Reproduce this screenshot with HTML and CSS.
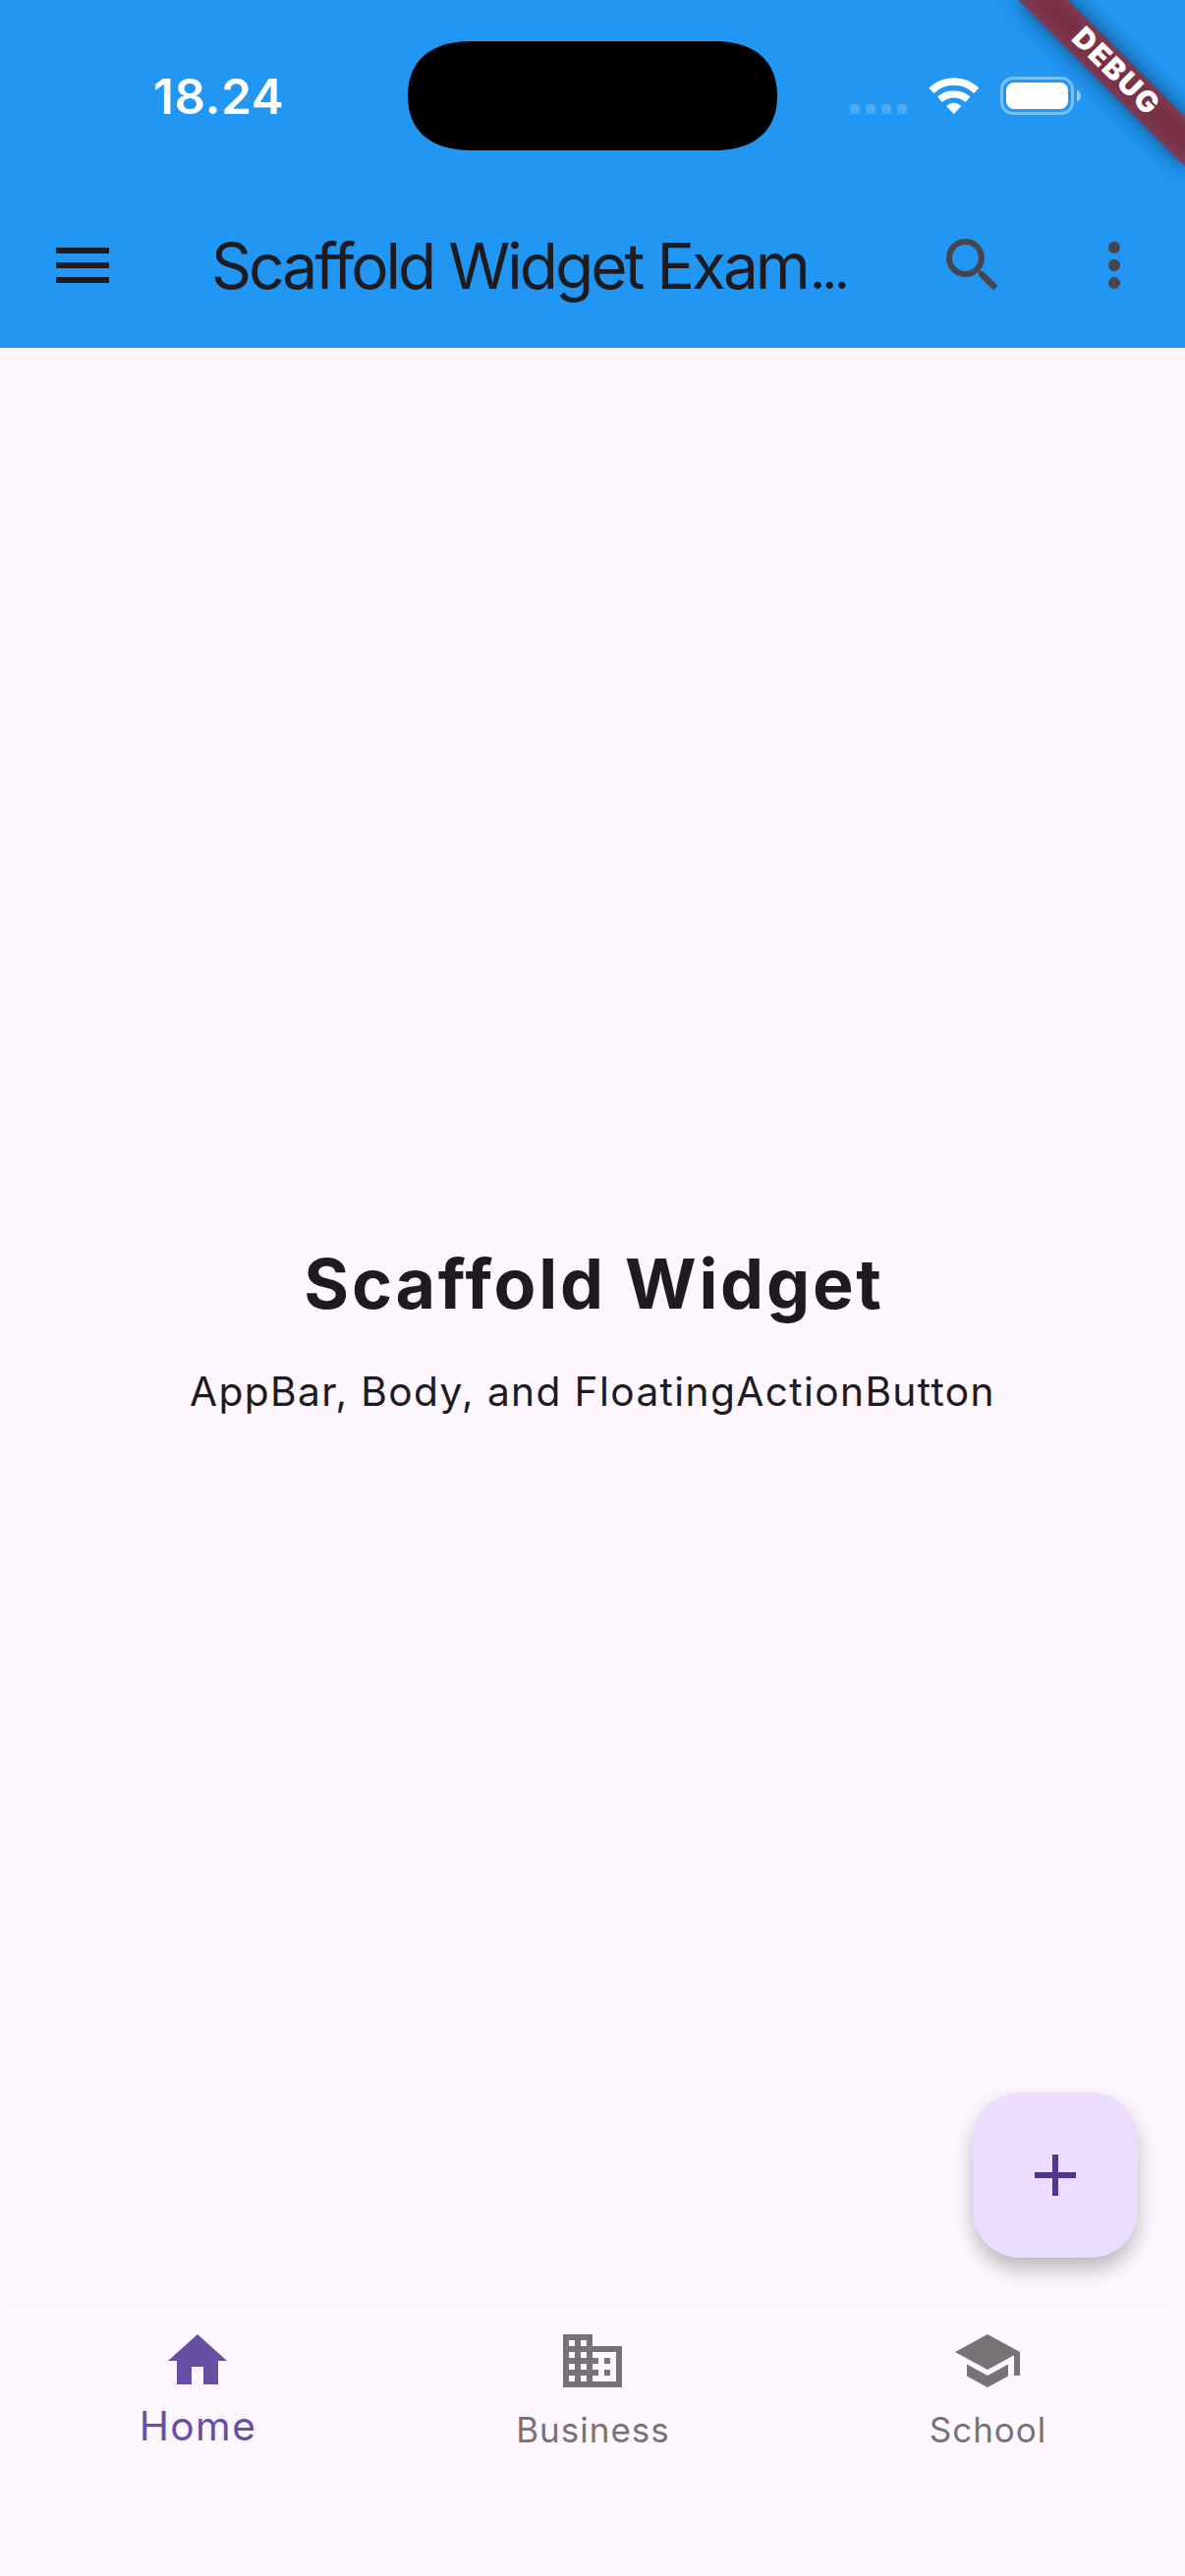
FILE: index.html
```
<!DOCTYPE html>
<html lang="en">
<head>
<meta charset="utf-8">
<title>Scaffold Widget Example</title>
<link rel="stylesheet" href="styles.css">
</head>
<body>
<div class="screen">
  <header class="top">
    <div class="status-bar">
      <span class="time">18.24</span>
      <svg class="island" viewBox="0 0 376 111"><path d="M64 0H312C354 0 376 21 376 55.5S354 111 312 111H64C22 111 0 90 0 55.5S22 0 64 0z"/></svg>
      <div class="status-icons">
        <div class="signal"><i></i><i></i><i></i><i></i></div>
        <svg class="wifi" viewBox="0 0 52 38" fill="none" stroke="#fff">
          <path d="M2.9 13.3A33 33 0 0 1 48.7 13.3" stroke-width="7.5"/>
          <path d="M11.5 22.3A21.6 21.6 0 0 1 40.1 22.3" stroke-width="7.3"/>
          <path d="M18 29Q25.8 22 33.5 29L25.8 37z" fill="#fff" stroke="none"/>
        </svg>
        <svg class="battery" viewBox="0 0 83 39">
          <rect x="1.5" y="1.5" width="72" height="36" rx="11.5" fill="none" stroke="#fff" stroke-opacity=".4" stroke-width="3"/>
          <rect x="6" y="6" width="63" height="27" rx="8" fill="#fff"/>
          <path d="M78 13.5Q82 15.5 82 19.5T78 25.5z" fill="#fff" fill-opacity=".5"/>
        </svg>
      </div>
    </div>
    <div class="app-bar">
      <svg class="icon menu" viewBox="0 0 24 24"><path d="M3 18h18v-2H3v2zm0-5h18v-2H3v2zm0-7v2h18V6H3z"/></svg>
      <h1 class="title">Scaffold Widget Exam<span class="dots">...</span></h1>
      <svg class="icon" viewBox="0 0 24 24"><path d="M15.5 14h-.79l-.28-.27C15.41 12.59 16 11.11 16 9.5 16 5.91 13.09 3 9.5 3S3 5.91 3 9.5 5.91 16 9.5 16c1.61 0 3.09-.59 4.23-1.57l.27.28v.79l5 4.99L20.49 19l-4.99-5zm-6 0C7.01 14 5 11.99 5 9.5S7.01 5 9.5 5 14 7.01 14 9.5 11.99 14 9.5 14z"/></svg>
      <svg class="icon" viewBox="0 0 24 24"><path d="M12 8c1.1 0 2-.9 2-2s-.9-2-2-2-2 .9-2 2 .9 2 2 2zm0 2c-1.1 0-2 .9-2 2s.9 2 2 2 2-.9 2-2-.9-2-2-2zm0 6c-1.1 0-2 .9-2 2s.9 2 2 2 2-.9 2-2-.9-2-2-2z"/></svg>
    </div>
  </header>
  <main class="body">
    <h2 class="heading">Scaffold Widget</h2>
    <p class="subtitle">AppBar, Body, and FloatingActionButton</p>
    <button class="fab" aria-label="Add"><svg class="icon" viewBox="0 0 24 24"><path d="M19 13h-6v6h-2v-6H5v-2h6V5h2v6h6v2z"/></svg></button>
  </main>
  <nav class="nav">
    <a class="item active"><svg class="icon" viewBox="0 0 24 24"><path d="M10 20v-6h4v6h5v-8h3L12 3 2 12h3v8z"/></svg><span>Home</span></a>
    <a class="item"><svg class="icon" viewBox="0 0 24 24"><path d="M12 7V3H2v18h20V7H12zM6 19H4v-2h2v2zm0-4H4v-2h2v2zm0-4H4V9h2v2zm0-4H4V5h2v2zm4 12H8v-2h2v2zm0-4H8v-2h2v2zm0-4H8V9h2v2zm0-4H8V5h2v2zm10 12h-8v-2h2v-2h-2v-2h2v-2h-2V9h8v10zm-2-8h-2v2h2v-2zm0 4h-2v2h2v-2z"/></svg><span>Business</span></a>
    <a class="item"><svg class="icon" viewBox="0 0 24 24"><path d="M5 13.18v4L12 21l7-3.82v-4L12 17l-7-3.82zM12 3L1 9l11 6 9-4.91V17h2V9L12 3z"/></svg><span>School</span></a>
  </nav>
  <div class="banner"><div class="banner-shadow"></div><div class="ribbon">DEBUG</div></div>
</div>
</body>
</html>
```
FILE: styles.css
```
* { box-sizing: border-box; }
body { margin: 0; font-family: Inter, "Liberation Sans", sans-serif; color: #1d1b20; background: #fef7ff; }
h1, h2, p { margin: 0; font-weight: 400; }
svg { display: block; flex: none; }
.screen { position: relative; width: 1206px; height: 2622px; overflow: hidden; display: flex; flex-direction: column; background: #fef7ff; }
.icon { width: 72px; height: 72px; fill: currentColor; }

.top { height: 354px; flex: none; background: #2196f3; }
.status-bar { height: 186px; display: grid; grid-template-columns: 415px 376px 415px; align-items: start; padding-top: 41.5px; }
.time { justify-self: start; margin-left: 156px; margin-top: 31px; font-size: 49.5px; line-height: 51px; font-weight: 600; letter-spacing: .6px; color: #fff; }
.island { width: 376px; height: 111px; }
.status-icons { display: flex; align-items: flex-start; padding: 36.5px 0 0 74px; }
.signal { display: flex; gap: 6px; margin-top: 28px; }
.signal i { width: 10px; height: 10px; border-radius: 3px; background: rgba(255, 255, 255, .2); }
.wifi { width: 52px; height: 38px; margin-left: 22px; margin-top: 1px; }
.battery { width: 83px; height: 39px; margin-left: 21px; }

.app-bar { height: 168px; display: flex; align-items: center; padding: 0 36px 0 48px; color: #49454f; }
.menu { color: #1d1b20; }
.title { flex: 1; margin-left: 95px; padding-top: 1px; font-size: 64px; line-height: 84px; letter-spacing: -3px; white-space: nowrap; color: #1d1b20; }
.dots { margin-left: 2px; font-size: 56px; line-height: 1; letter-spacing: -3.7px; }
.app-bar .icon + .icon { margin-left: 72px; }

.body { flex: 1; position: relative; display: flex; flex-direction: column; align-items: center; justify-content: center; gap: 30px; }
.heading { font-size: 70px; line-height: 102px; font-weight: 700; letter-spacing: 2.72px; padding-left: 3px; }
.subtitle { font-size: 40.7px; line-height: 57px; letter-spacing: 1.37px; }
.fab { position: absolute; right: 48px; bottom: 48px; width: 168px; height: 168px; padding: 48px; border: 0; border-radius: 48px; background: #eaddff; color: #4f378b; box-shadow: 0 14px 22px -2px rgba(0, 0, 0, .24), 0 2px 26px rgba(0, 0, 0, .06); }

.nav { position: relative; height: 276px; flex: none; display: grid; grid-template-columns: repeat(3, 1fr); padding-top: 21px; background: #fef7ff; box-shadow: 0 -2px 14px rgba(0, 0, 0, .025); }
.item { display: flex; flex-direction: column; align-items: center; color: #787276; }
.item span { font-size: 35px; line-height: 68px; letter-spacing: 1px; padding-left: 1px; }
.item.active { color: #6750a4; }
.item.active span { font-size: 40.7px; line-height: 62px; letter-spacing: 1.4px; }

.banner { position: absolute; right: 0; top: 0; width: 200px; height: 200px; overflow: hidden; }
.ribbon, .banner-shadow { position: absolute; left: 80px; top: 84px; width: 240px; height: 36px; transform-origin: 120px -84px; transform: rotate(45deg); }
.banner-shadow { background: rgba(0, 0, 0, .5); filter: blur(11px); }
.ribbon { background: rgba(183, 28, 28, .627); color: #fff; text-align: center; font-size: 29.7px; line-height: 32px; font-weight: 900; letter-spacing: 1.75px; padding-left: 4px; }
```
